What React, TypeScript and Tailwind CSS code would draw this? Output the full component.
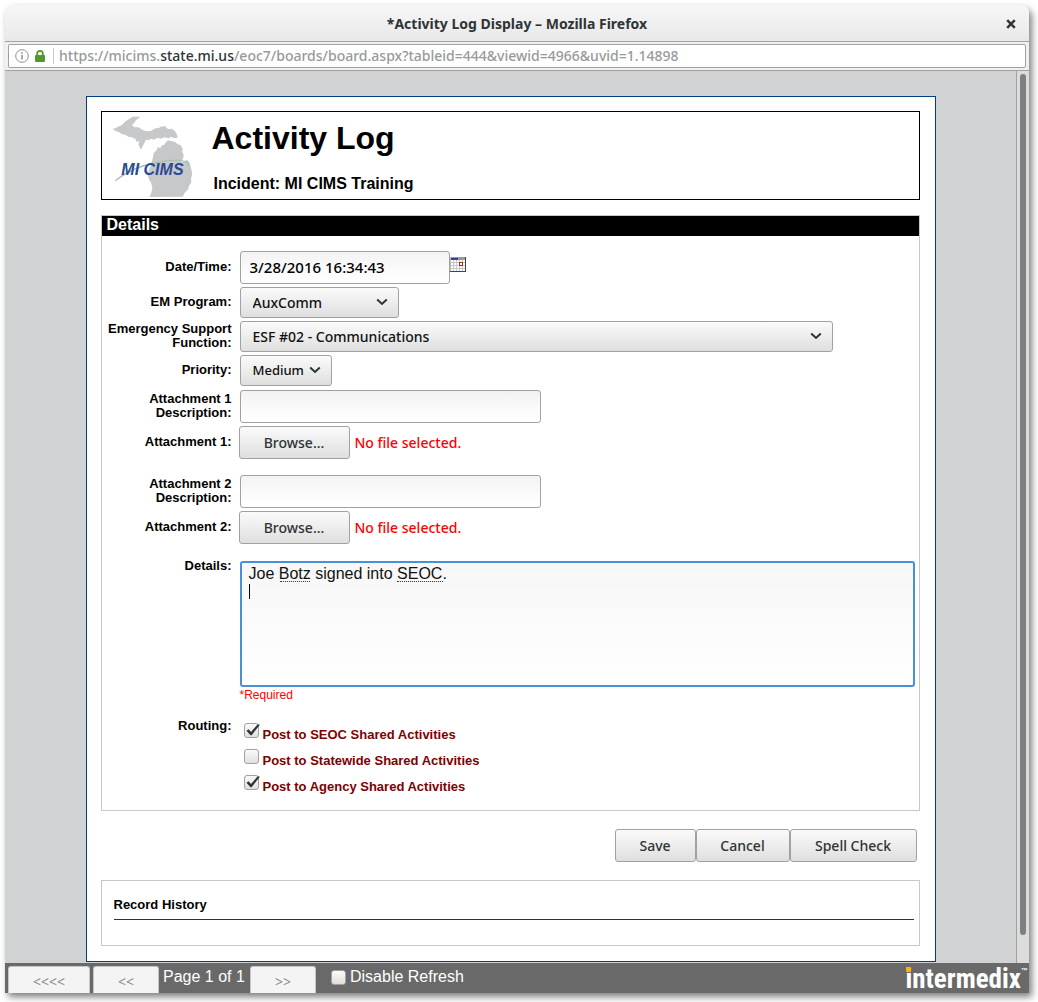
import { useRef, type ReactNode } from "react";

const uiFont = "font-['Noto_Sans',sans-serif]";
const raised =
  "rounded-[3px] border border-[#a1a1a1] bg-linear-to-b from-[#fafafa] via-[#ededed] to-[#dfdfdf]";
const sunken =
  "rounded-[3px] border border-[#a1a1a1] bg-linear-to-b from-[#f2f2f2] via-[#fafafa] to-white outline-none";

function Row({
  label,
  htmlFor,
  top = false,
  children,
}: {
  label: string;
  htmlFor?: string;
  top?: boolean;
  children: ReactNode;
}) {
  const Label = htmlFor ? "label" : "span";
  return (
    <div className={top ? "flex items-start" : "flex items-center"}>
      <Label
        htmlFor={htmlFor}
        className={`w-[130px] shrink-0 text-right text-[13px] leading-[14px] font-bold ${top ? "-mt-[2px]" : "pb-[2px]"}`}
      >
        {label}
      </Label>
      <div className="ml-2 min-w-0 flex-1">{children}</div>
    </div>
  );
}

function Select({ id, value, size }: { id: string; value: string; size: string }) {
  return (
    <div className={`relative max-w-full ${size}`}>
      <select
        id={id}
        defaultValue={value}
        className={`block h-[31px] w-full appearance-none pl-3 font-medium text-[#111] ${uiFont} ${raised}`}
      >
        <option>{value}</option>
      </select>
      <svg
        className="pointer-events-none absolute top-[11px] right-[11px]"
        width="12"
        height="8"
        viewBox="0 0 12 8"
        fill="none"
        stroke="#2e3436"
        strokeWidth="2"
      >
        <path d="M1.200 1.500 6 6 10.800 1.500" />
      </svg>
    </div>
  );
}

function FilePicker({ id }: { id: string }) {
  const input = useRef<HTMLInputElement>(null);
  return (
    <div className={`-ml-px flex items-center text-sm font-medium ${uiFont}`}>
      <input ref={input} id={id} type="file" className="sr-only" tabIndex={-1} />
      <button
        type="button"
        onClick={() => input.current?.click()}
        className={`h-[33px] w-[111px] text-[#2e3436] ${raised}`}
      >
        Browse...
      </button>
      <span className="ml-[5px] text-[#ff0000]">No file selected.</span>
    </div>
  );
}

function Check({ label, checked }: { label: string; checked: boolean }) {
  return (
    <label className="flex items-start pb-[6px]">
      <span className="relative mr-1 size-[15px] shrink-0">
        <input
          type="checkbox"
          defaultChecked={checked}
          className={`peer block size-[15px] appearance-none ${raised}`}
        />
        <svg
          className="pointer-events-none absolute top-0 left-0 hidden overflow-visible peer-checked:block"
          width="16"
          height="15"
          viewBox="0 0 16 15"
          fill="#2e3436"
        >
          <path d="M2.500 7.800 4.600 6.300 7 8.900 13.500 1.500 16 1.500 7.600 12.200 6.500 12.200Z" />
        </svg>
      </span>
      <span className="pt-1 text-[13px] leading-4 font-bold text-[#800000]">{label}</span>
    </label>
  );
}

function MichiganLogo() {
  return (
    <svg width="80" height="81" viewBox="66 46 240 243" className="shrink-0">
      <g fill="#c7c8ca">
        <path d="M68 84 76 83 84 78 96 73 104 64 116 56 128 48 150 48 146 53 138 58 133 66 126 74 134 80 146 80 152 84 162 90 172 92 184 90 196 83 206 82 212 78 226 76 229 82 238 86 246 84 255 92 260 100 263 111 252 112 244 108 236 113 222 110 213 114 202 111 192 117 182 114 176 119 168 117 163 128 157 138 153 147 148 138 145 130 149 122 140 124 137 116 126 110 116 109 106 102 96 101 88 95 78 92Z" />
        <path d="M228 125 234 119 246 122 256 124 262 130 272 134 278 144 277 154 281 162 279 174 272 184 284 182 292 177 299 186 303 202 307 220 303 234 304 246 298 254 293 268 284 276 278 288 178 289 184 276 187 262 184 248 177 236 174 224 176 208 181 198 186 182 189 168 192 156 200 148 204 139 212 143 213 136 222 132Z" />
      </g>
      <path
        d="M76 240C120 205 190 178 262 179 290 180 302 188 292 197"
        fill="none"
        stroke="#a9bfb4"
        strokeWidth="4"
      />
      <text
        x="94"
        y="222"
        fill="#2a4b92"
        fontFamily="Liberation Sans, sans-serif"
        fontSize="48"
        fontWeight="bold"
        fontStyle="italic"
      >
        MI CIMS
      </text>
    </svg>
  );
}

function CalendarIcon() {
  return (
    <svg width="16" height="15" viewBox="0 0 16 15" shapeRendering="crispEdges">
      <path fill="#fff" d="M0 0h16v15H0z" />
      <path fill="#999" d="M0 0h16v3H0z" />
      <path fill="#3c3ca8" d="M1 1h7v2H1z" />
      <path
        fill="#c8c8c8"
        d="M0 5h15v1H0zM0 8h15v1H0zM0 11h15v1H0zM3 3h1v11H3zM6 3h1v11H6zM9 3h1v11H9zM12 3h1v11h-1z"
      />
      <path fill="#444" d="M15 0h1v15H0v-1h15z" />
      <path fill="#bbb" d="M0 0h1v14H0z" />
      <path fill="#a02c2c" d="M9 5h4v4H9z" />
      <path fill="#fff" d="M10 6h2v2h-2z" />
    </svg>
  );
}

function PageButton({ children, width }: { children: string; width: string }) {
  return (
    <button
      type="button"
      className={`h-[27px] rounded-t-[3px] border border-b-0 border-[#c6c6c6] bg-[#f4f4f4] pt-1 text-sm text-[#8b8e8f] ${width} ${uiFont}`}
    >
      {children}
    </button>
  );
}

export default function App() {
  return (
    <div className="flex min-h-screen flex-col bg-white pt-[5px] pr-[9px] pb-[9px] pl-[5px] font-['Liberation_Sans',sans-serif] text-black">
      <div className="flex flex-1 flex-col rounded-t-lg shadow-[3px_4px_7px_rgba(0,0,0,0.5)]">
        <header
          className={`flex h-[37px] items-center rounded-t-lg border-t border-b border-t-[#f4f4f4] border-b-[#a1a1a1] bg-linear-to-b from-[#f6f6f6] to-[#e9e9e9] pr-3 pl-6 text-[#2e3436] ${uiFont}`}
        >
          <h1 className="flex-1 text-center text-sm font-bold">
            *Activity Log Display – Mozilla Firefox
          </h1>
          <button type="button" aria-label="Close" className="p-px">
            <svg width="10" height="10" viewBox="0 0 10 10" stroke="currentColor" strokeWidth="2.400">
              <path d="M1.200 1.200 8.800 8.800M8.800 1.200 1.200 8.800" />
            </svg>
          </button>
        </header>

        <div className="border-b border-[#a1a1a1] bg-[#f0f0f0] px-[3px] py-[2px]">
          <div className="flex h-6 items-center rounded-[2px] border border-[#a1a1a1] bg-white pl-[6px]">
            <svg width="14" height="14" viewBox="0 0 14 14" fill="none" stroke="#919191">
              <circle cx="7" cy="7" r="6.300" />
              <path strokeWidth="1.600" d="M7 6v4.500M7 3.300v1.500" />
            </svg>
            <svg className="ml-[6px]" width="10" height="12" viewBox="0 0 10 12">
              <path fill="none" stroke="#4e9a2a" strokeWidth="1.800" d="M2.200 6V3.500a2.800 2.600 0 0 1 5.600 0V6" />
              <rect y="5" width="10" height="7" rx="1" fill="#4e9a2a" />
            </svg>
            <span className="mr-[5px] ml-2 h-4 w-px bg-[#c8c8c8]" />
            <span className={`text-sm font-medium text-[#979a9b] ${uiFont}`}>
              https://micims.<span className="text-[#2e3436]">state.mi.us</span>
              /eoc7/boards/board.aspx?tableid=444&amp;viewid=4966&amp;uvid=1.14898
            </span>
          </div>
        </div>

        <div className="flex flex-1 bg-[#d1d2d4]">
          <main className="min-w-0 flex-1 pt-[25px] pb-px">
            <div className="mx-auto w-full max-w-[850px] border border-[#003f7d] bg-white pt-[14px] pr-[15px] pb-[15px] pl-[14px]">
              <div className="flex h-[89px] border border-black pt-1 pl-[10px]">
                <MichiganLogo />
                <div className="ml-5">
                  <h2 className="pt-1 text-[32px] leading-9 font-bold">Activity Log</h2>
                  <p className="mt-[19px] pl-[2px] text-base leading-[18px] font-bold">
                    Incident: MI CIMS Training
                  </p>
                </div>
              </div>

              <form className="mt-[15px] border border-[#c8c8c8]" onSubmit={(e) => e.preventDefault()}>
                <h3 className="h-5 bg-black pl-[5px] text-base leading-[18px] font-bold text-white">
                  Details
                </h3>
                <div className="flex flex-col gap-[3px] pt-[15px] pb-[9px]">
                  <Row label="Date/Time:" htmlFor="date">
                    <div className="flex">
                      <input
                        id="date"
                        defaultValue="3/28/2016 16:34:43"
                        className={`h-[33px] w-[210px] pb-[2px] pl-[9px] text-[15px] font-medium ${uiFont} ${sunken}`}
                      />
                      <button type="button" aria-label="Pick a date" className="self-start pt-[6px]">
                        <CalendarIcon />
                      </button>
                    </div>
                  </Row>
                  <Row label="EM Program:" htmlFor="program">
                    <Select id="program" value="AuxComm" size="w-[159px] text-sm" />
                  </Row>
                  <Row label="Emergency Support Function:" htmlFor="esf">
                    <Select id="esf" value="ESF #02 - Communications" size="w-[593px] text-sm" />
                  </Row>
                  <Row label="Priority:" htmlFor="priority">
                    <Select id="priority" value="Medium" size="w-[92px] text-[13px]" />
                  </Row>
                  {[1, 2].map((n) => (
                    <div
                      key={n}
                      className={n === 1 ? "mt-px flex flex-col gap-[3px]" : "mt-[13px] flex flex-col gap-[3px]"}
                    >
                      <Row label={`Attachment ${n} Description:`} htmlFor={`description${n}`}>
                        <input
                          id={`description${n}`}
                          className={`block h-[33px] w-[301px] px-2 text-sm ${uiFont} ${sunken}`}
                        />
                      </Row>
                      <Row label={`Attachment ${n}:`} htmlFor={`file${n}`}>
                        <FilePicker id={`file${n}`} />
                      </Row>
                    </div>
                  ))}
                  <div className="mt-[14px]">
                    <Row label="Details:" htmlFor="details" top>
                      <div className="relative mr-1">
                        <textarea
                          id="details"
                          defaultValue={"Joe Botz signed into SEOC.\n"}
                          className="block h-[126px] w-full resize-none rounded-[3px] border-2 border-[#4a90d9] bg-linear-to-b from-[#f7f7f7] to-white px-[7px] pt-[2px] text-base leading-[18px] text-[#111] outline-none"
                        />
                        <span className="pointer-events-none absolute top-5 left-10 w-[30px] border-b border-dotted border-[#d00]" />
                        <span className="pointer-events-none absolute top-5 left-[157px] w-[46px] border-b border-dotted border-[#d00]" />
                        <span className="pointer-events-none absolute top-[23px] left-[9px] h-[15px] w-px bg-black" />
                      </div>
                      <p className="text-[12px] leading-4 text-[#ff0000]">*Required</p>
                    </Row>
                  </div>
                  <div className="mt-[15px]">
                    <Row label="Routing:" top>
                      <div role="group" aria-label="Routing" className="pt-[2px] pl-1">
                        <Check label="Post to SEOC Shared Activities" checked />
                        <Check label="Post to Statewide Shared Activities" checked={false} />
                        <Check label="Post to Agency Shared Activities" checked />
                      </div>
                    </Row>
                  </div>
                </div>
              </form>

              <div className={`mt-[18px] mr-[3px] flex justify-end text-sm font-medium text-[#2e3436] ${uiFont}`}>
                <button type="button" className={`h-[33px] w-[81px] ${raised}`}>Save</button>
                <button type="button" className={`h-[33px] w-[94px] ${raised}`}>Cancel</button>
                <button type="button" className={`h-[33px] w-[127px] ${raised}`}>Spell Check</button>
              </div>

              <section className="mt-[18px] h-[66px] border border-[#c8c8c8] pt-[16px] pr-[5px] pl-3">
                <h3 className="border-b border-[#333] pb-[7px] text-[13px] leading-[15px] font-bold">
                  Record History
                </h3>
              </section>
            </div>
          </main>
          <div className="w-[13px] border-l border-[#a1a1a1] bg-[#dcdcdc] pt-[3px] pb-7 pl-[3px]">
            <div className="h-full w-[6px] rounded-full bg-[#7c8080]" />
          </div>
        </div>

        <footer className="flex h-[30px] items-start bg-[#696969] pl-[3px] text-base text-white">
          <div className="flex flex-1 items-start">
            <div className="mt-[3px] flex gap-[3px]">
              <PageButton width="w-[82px]">{"<<<<"}</PageButton>
              <PageButton width="w-[66px]">{"<<"}</PageButton>
            </div>
            <span className="w-[91px] pl-1 leading-7">Page 1 of 1</span>
            <div className="mt-[3px] flex">
              <PageButton width="w-[66px]">{">>"}</PageButton>
            </div>
            <label className="ml-[15px] flex items-center leading-7">
              <input type="checkbox" className={`mr-1 size-[15px] appearance-none ${raised}`} />
              Disable Refresh
            </label>
          </div>
          <div className="relative mr-px flex pt-px">
            <span className="font-['Liberation_Sans_Narrow','Roboto_Condensed',Roboto,sans-serif] text-[27px] leading-[30px] font-bold">
              intermedix
            </span>
            <sup className="top-0 pt-[3px] text-[7px] leading-none font-bold">™</sup>
            <span className="absolute top-[4px] left-px h-[5px] w-[5px] bg-[#ffb000]" />
          </div>
        </footer>
      </div>
    </div>
  );
}
